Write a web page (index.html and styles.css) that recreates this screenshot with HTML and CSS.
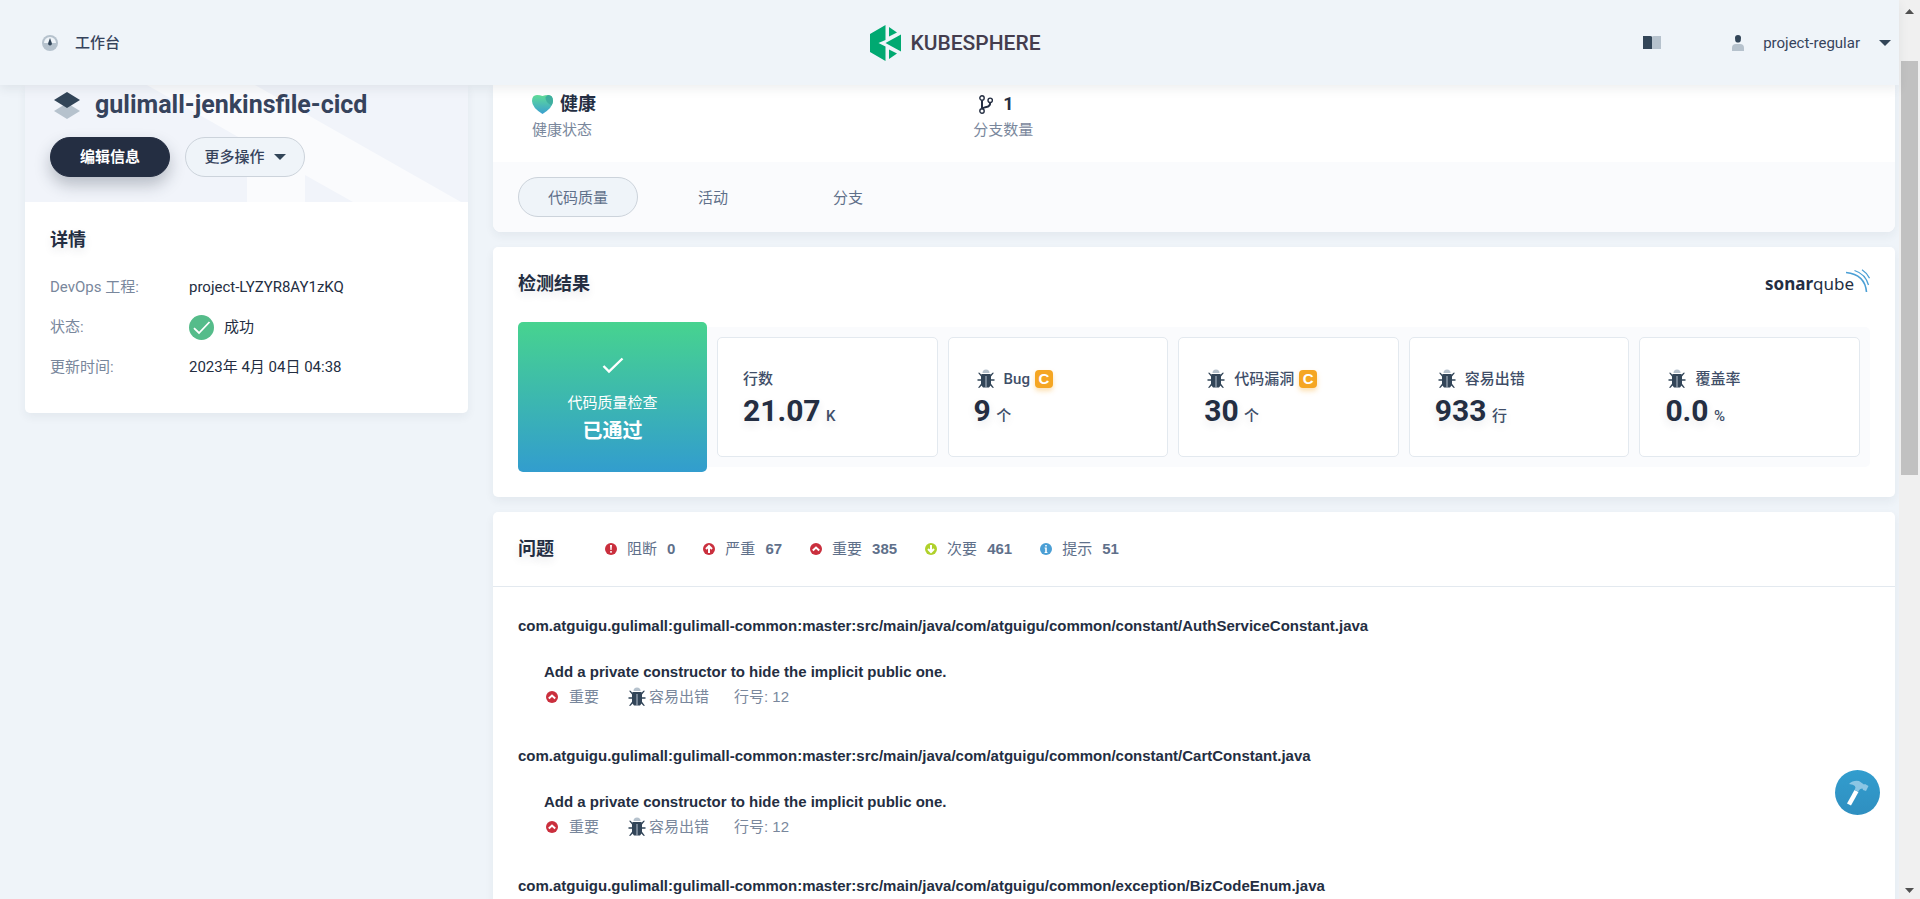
FILE: index.html
```html
<!DOCTYPE html>
<html lang="zh-CN">
<head>
<meta charset="utf-8">
<title>gulimall-jenkinsfile-cicd - KubeSphere</title>
<link rel="stylesheet" href="styles.css">
</head>
<body>
<svg class="sprite" aria-hidden="true">
  <symbol id="i-bug" viewBox="0 0 20 20">
    <path class="c-light" d="M6.500 4a3.500 3.500 0 0 1 7 0z"/>
    <path class="c-dark" d="M5.500 5h9l.5 2v9l-2 2.500H7L5 16V7z"/>
    <path class="c-light" d="M9.500 7h1v11.500h-1z"/>
    <path class="c-dark" d="M2 3.800h1.600l2.400 2.600-1 1.200zM18 3.800h-1.600L14 6.400l1 1.200zM1.500 10.200h4v1.600h-4zM14.500 10.200h4v1.600h-4zM2 18.700h1.600l2.600-3-1-1.200zM18 18.700h-1.600l-2.600-3 1-1.200z"/>
  </symbol>
  <symbol id="i-major" viewBox="0 0 12 12">
    <circle class="c-red" cx="6" cy="6" r="6"/>
    <path class="ln" d="M2.800 7.500L6 4.500l3.200 3"/>
  </symbol>
  <symbol id="i-caret" viewBox="0 0 12 6"><path class="c-dark" d="M0 0h12L6 6z"/></symbol>
</svg>
<div class="window">
  <div class="page">
    <header class="topbar">
      <nav class="topbar-side">
        <a class="nav-link" href="#">
          <svg class="ico16" viewBox="0 0 16 16"><circle class="c-light" cx="8" cy="8" r="8"/><path fill="#eff4f9" d="M2 8a6 6 0 0 1 12 0z"/><path class="c-dark" d="M8 3l1.800 5a1.900 1.900 0 1 1-3.600 0z"/></svg>
          <span>工作台</span>
        </a>
      </nav>
      <a class="brand" href="#">
        <svg class="brand-mark" viewBox="0 0 31 36"><path fill="#00a971" d="M0 9L15.500 0v15L8.500 18l7 3.500V36L0 27zM19 2l8 5.500-8 4zM31 9.500v17L15.500 18zM19 24.500l8 4-8 5.500z"/></svg>
        <span>KUBESPHERE</span>
      </a>
      <div class="topbar-side topbar-right">
        <button class="plain" aria-label="文档">
          <svg class="book" viewBox="0 0 18 13"><path class="c-dark" d="M0 0h7q2 0 2 1v12H0z"/><path class="c-light" d="M18 0h-7Q9 0 9 1v12h9z"/></svg>
        </button>
        <button class="plain user">
          <svg class="person" viewBox="0 0 12 16"><path class="c-dark" d="M6 0q3 0 3 3t-1 4q-2 1-4 0-1-1-1-4t3-3z"/><path class="c-light" d="M0 16v-3q0-4 4-4h4q4 0 4 4v3z"/></svg>
          <span>project-regular</span>
          <svg class="caret"><use href="#i-caret"/></svg>
        </button>
      </div>
    </header>

    <main class="content">
      <aside class="card side">
        <div class="banner">
          <svg class="banner-art" viewBox="0 0 443 117" preserveAspectRatio="xMinYMin slice" aria-hidden="true"><path fill="#fafbfd" d="M122 0h108l206 117H328L280 90v27h-58V57z"/></svg>
          <div class="title-row">
            <svg class="layers" viewBox="0 0 26 27"><path class="c-light" d="M0 19l13-8 13 8-13 8z"/><path class="c-dark" d="M0 8l13-8 13 8-13 8z"/></svg>
            <h1>gulimall-jenkinsfile-cicd</h1>
          </div>
          <div class="actions">
            <button class="pill pill-dark">编辑信息</button>
            <button class="pill">更多操作 <svg class="caret"><use href="#i-caret"/></svg></button>
          </div>
        </div>
        <section class="details">
          <h2>详情</h2>
          <dl>
            <dt>DevOps 工程:</dt><dd>project-LYZYR8AY1zKQ</dd>
            <dt>状态:</dt><dd><svg class="ok" viewBox="0 0 25 25"><circle fill="#55bc8a" cx="12.500" cy="12.500" r="12.500"/><path fill="none" stroke="#fff" stroke-width="1.800" d="M5 13.200l5 4.800L20.500 7"/></svg>成功</dd>
            <dt>更新时间:</dt><dd>2023年 4月 04日 04:38</dd>
          </dl>
        </section>
      </aside>

      <div class="main-col">
        <section class="card overview">
          <div class="stats">
            <div class="stat">
              <div class="stat-value">
                <svg class="heart" viewBox="0 0 21 19"><defs><linearGradient id="hg" x1="0" y1="0" x2="0" y2="1"><stop offset="0" stop-color="#5fdc98"/><stop offset="1" stop-color="#3a9fd0"/></linearGradient></defs><path fill="url(#hg)" d="M10.500 19Q0 12.500 0 6 0 0 5 0q3 0 5.500 1Q13 0 16 0q5 0 5 6 0 6.500-10.500 13z"/><path fill="#3fae9f" d="M16 0q5 0 5 6 0 2-1.500 4.500Q13 7 13.500 2z"/></svg>
                健康
              </div>
              <div class="stat-label">健康状态</div>
            </div>
            <div class="stat">
              <div class="stat-value branch-value">
                <svg class="branch" viewBox="0 0 14 19"><g fill="none" stroke="#242e42"><path stroke-width="2" d="M3 5.500v8M11.200 7.500q0 4-4 4.500-3 .5-4 2"/><circle stroke-width="1.400" cx="3" cy="3" r="2.200"/><circle stroke-width="1.400" cx="3" cy="16" r="2.200"/><circle stroke-width="1.400" cx="11.200" cy="5.300" r="2.200"/></g></svg>
                1
              </div>
              <div class="stat-label">分支数量</div>
            </div>
          </div>
          <nav class="tabs">
            <a class="tab active" href="#">代码质量</a>
            <a class="tab" href="#">活动</a>
            <a class="tab" href="#">分支</a>
          </nav>
        </section>

        <section class="card result">
          <div class="result-head">
            <h2>检测结果</h2>
            <div class="sonar"><b>sonar</b><span>qube</span><svg viewBox="0 0 24 24"><g fill="none" stroke="#4b9fd5"><path stroke-width="1.600" d="M0 3.500q19 2 20.500 19.500"/><path stroke-width="1.300" d="M8.500 1.500Q19.500 5 22.500 16"/><path stroke-width="1.200" d="M16 .7q5 3.200 7.500 8.500"/></g></svg></div>
          </div>
          <div class="metrics-row">
            <div class="gate">
              <svg viewBox="0 0 22 17"><path fill="none" stroke="#fff" stroke-width="2.400" d="M1.500 9l5.500 5.500L20.500 1.500"/></svg>
              <span>代码质量检查</span>
              <strong>已通过</strong>
            </div>
            <div class="metrics">
              <div class="metric"><div class="m-label">行数</div><div class="m-value">21.07 <small>K</small></div></div>
              <div class="metric"><div class="m-label"><svg class="bug"><use href="#i-bug"/></svg><span>Bug</span><b class="grade">C</b></div><div class="m-value">9 <small>个</small></div></div>
              <div class="metric"><div class="m-label"><svg class="bug"><use href="#i-bug"/></svg><span>代码漏洞</span><b class="grade">C</b></div><div class="m-value">30 <small>个</small></div></div>
              <div class="metric"><div class="m-label"><svg class="bug"><use href="#i-bug"/></svg><span>容易出错</span></div><div class="m-value">933 <small>行</small></div></div>
              <div class="metric"><div class="m-label"><svg class="bug"><use href="#i-bug"/></svg><span>覆盖率</span></div><div class="m-value">0.0 <small>%</small></div></div>
            </div>
          </div>
        </section>

        <section class="card issues">
          <div class="issues-head">
            <h2>问题</h2>
            <ul class="levels">
              <li><svg class="lv" viewBox="0 0 12 12"><circle class="c-red" cx="6" cy="6" r="6"/><path fill="#fff" d="M5 2h2l-.4 5H5.400zM5.200 8h1.600v1.700H5.200z"/></svg><span>阻断</span><b>0</b></li>
              <li><svg class="lv" viewBox="0 0 12 12"><circle class="c-red" cx="6" cy="6" r="6"/><path class="ln" d="M6 10V3.500M3 6l3-3 3 3"/></svg><span>严重</span><b>67</b></li>
              <li><svg class="lv"><use href="#i-major"/></svg><span>重要</span><b>385</b></li>
              <li><svg class="lv" viewBox="0 0 12 12"><circle fill="#b0d12b" cx="6" cy="6" r="6"/><path class="ln" d="M6 2v6.500M3 6l3 3 3-3"/></svg><span>次要</span><b>461</b></li>
              <li><svg class="lv" viewBox="0 0 12 12"><circle fill="#4b9fd5" cx="6" cy="6" r="6"/><path fill="#fff" d="M5.200 2h1.600v1.500H5.200zM4.600 4.500h2.200V9h.6v1H4.600V9h.6V5.500h-.6z"/></svg><span>提示</span><b>51</b></li>
            </ul>
          </div>
          <div class="issue-list">
            <article class="file">
              <h3>com.atguigu.gulimall:gulimall-common:master:src/main/java/com/atguigu/common/constant/AuthServiceConstant.java</h3>
              <div class="issue">
                <p class="message">Add a private constructor to hide the implicit public one.</p>
                <div class="meta"><span class="sev"><svg class="lv"><use href="#i-major"/></svg>重要</span><span class="type"><svg class="bug"><use href="#i-bug"/></svg>容易出错</span><span>行号: 12</span></div>
              </div>
            </article>
            <article class="file">
              <h3>com.atguigu.gulimall:gulimall-common:master:src/main/java/com/atguigu/common/constant/CartConstant.java</h3>
              <div class="issue">
                <p class="message">Add a private constructor to hide the implicit public one.</p>
                <div class="meta"><span class="sev"><svg class="lv"><use href="#i-major"/></svg>重要</span><span class="type"><svg class="bug"><use href="#i-bug"/></svg>容易出错</span><span>行号: 12</span></div>
              </div>
            </article>
            <article class="file">
              <h3>com.atguigu.gulimall:gulimall-common:master:src/main/java/com/atguigu/common/exception/BizCodeEnum.java</h3>
            </article>
          </div>
        </section>
      </div>
    </main>
  </div>

  <div class="scrollbar" aria-hidden="true">
    <svg class="sb-arrow" viewBox="0 0 9 5"><path fill="#505050" d="M4.500 0L9 5H0z"/></svg>
    <div class="sb-track"><div class="sb-thumb"></div></div>
    <svg class="sb-arrow" viewBox="0 0 9 5"><path fill="#505050" d="M0 0h9L4.500 5z"/></svg>
  </div>
</div>
<button class="fab" aria-label="工具箱">
  <svg viewBox="0 0 24 26"><path fill="#fff" d="M8.500 10l4 2L5 25.500 1 23.500z"/><path fill="#8cc6e4" d="M3 4Q7 0 13 1l5 3.500 1-.5 3.500 2L20 11l-3-1-.5-1.500q-3 0-4 3L8.500 10Q12 5 3 4z"/></svg>
</button>
</body>
</html>
```
FILE: styles.css
```css
* { box-sizing: border-box; }
body {
  margin: 0;
  height: 100vh;
  overflow: hidden;
  background: #eff4f9;
  color: #242e42;
  font: 400 15px/20px Roboto, "Noto Sans CJK SC", sans-serif;
}
h1, h2, h3, p, ul, dl, dd { margin: 0; padding: 0; }
a { color: inherit; text-decoration: none; }
button { font: inherit; color: inherit; cursor: pointer; }
svg { display: block; flex: none; }
.sprite { position: absolute; width: 0; height: 0; }
.c-dark { fill: #324558; }
.c-light { fill: #b6c2cd; }
.c-red { fill: #ca2f3d; }
.ln { fill: none; stroke: #fff; stroke-width: 2; }

.window { display: flex; height: 100vh; }
.page { flex: 1; min-width: 0; display: flex; flex-direction: column; }

.topbar {
  position: relative;
  z-index: 2;
  display: flex;
  align-items: center;
  flex: none;
  height: 85px;
  padding: 0 8px 0 20px;
  background: #eff4f9;
  box-shadow: 0 4px 10px rgba(36, 46, 66, 0.08);
  color: #36435c;
}
.topbar-side { flex: 1 1 0; display: flex; align-items: center; }
.topbar-right { justify-content: flex-end; gap: 71px; }
.nav-link { display: flex; align-items: center; gap: 17px; padding-left: 22px; font-weight: 500; }
.ico16 { width: 16px; height: 16px; }
.brand {
  display: flex;
  align-items: center;
  gap: 9px;
  color: #443d4e;
  font-size: 21px;
  line-height: 36px;
  font-weight: 500;
}
.brand-mark { width: 31px; height: 36px; }
.plain { display: flex; align-items: center; padding: 0; border: 0; background: none; }
.user { gap: 19px; }
.book { width: 18px; height: 13px; }
.person { width: 12px; height: 16px; }
.caret { width: 12px; height: 6px; }

.content {
  flex: 1;
  min-height: 0;
  display: grid;
  grid-template-columns: 443px minmax(0, 1fr);
  align-items: start;
  gap: 25px;
  padding: 0 4px 0 25px;
  overflow: hidden;
}
.card {
  background: #fff;
  border-radius: 5px;
  box-shadow: 0 4px 10px rgba(36, 46, 66, 0.06);
}
h2 { font-size: 18px; line-height: 24px; font-weight: 700; text-shadow: 0 4px 8px rgba(36, 46, 66, 0.1); }

.side { border-radius: 0 0 5px 5px; }
.banner { position: relative; padding: 4px 25px 25px; background: #f1f4fa; }
.banner-art { position: absolute; inset: 0; width: 100%; height: 100%; }
.title-row { position: relative; display: flex; align-items: center; gap: 15px; height: 32px; padding-left: 4px; }
.layers { width: 26px; height: 27px; }
h1 { font-size: 25px; line-height: 32px; font-weight: 700; color: #36435c; }
.actions { position: relative; display: flex; gap: 15px; margin-top: 16px; }
.pill {
  display: flex;
  align-items: center;
  justify-content: center;
  gap: 9px;
  width: 120px;
  height: 40px;
  padding: 0;
  border: 1px solid #ccd3db;
  border-radius: 20px;
  background: #eff4f9;
  color: #36435c;
  font-weight: 500;
}
.pill-dark {
  border-color: #242e42;
  background: #242e42;
  color: #fff;
  font-weight: 700;
  box-shadow: 0 8px 16px rgba(36, 46, 66, 0.28);
}
.details { padding: 26px 25px 31px; }
.details dl {
  display: grid;
  grid-template-columns: 114px 1fr;
  column-gap: 25px;
  row-gap: 10px;
  margin-top: 20px;
}
.details dt, .details dd { display: flex; align-items: center; min-height: 30px; }
.details dt { color: #79879c; }
.ok { width: 25px; height: 25px; margin-right: 10px; }

.main-col { display: flex; flex-direction: column; gap: 15px; }
.overview { border-radius: 0 0 8px 8px; }
.stats { display: grid; grid-template-columns: repeat(3, 1fr); padding: 7px 39px 21px; }
.stat-value { display: flex; align-items: center; gap: 7px; height: 24px; font-size: 18px; font-weight: 700; }
.stat-label { margin-top: 3px; line-height: 22px; color: #79879c; }
.heart { width: 21px; height: 19px; }
.branch { width: 14px; height: 19px; }
.branch-value { gap: 10px; padding-left: 6px; }
.tabs { display: flex; gap: 15px; padding: 15px 25px; background: #fafbfd; border-radius: 0 0 8px 8px; }
.tab {
  width: 120px;
  height: 40px;
  border: 1px solid transparent;
  border-radius: 20px;
  line-height: 40px;
  text-align: center;
  color: #5f708a;
}
.tab.active { border-color: #ccd3db; background: #eff4f9; }

.result { padding: 20px 25px 25px; }
.result-head { display: flex; align-items: flex-start; justify-content: space-between; height: 55px; padding-top: 5px; }
.sonar { display: flex; align-items: center; font: 400 17px/24px "Noto Sans", sans-serif; color: #242e42; }
.sonar svg { width: 24px; height: 24px; margin: -6px 0 0 -8px; }
.metrics-row { display: flex; align-items: center; }
.gate {
  width: 189px;
  height: 150px;
  display: flex;
  flex-direction: column;
  align-items: center;
  padding-top: 35px;
  border-radius: 5px;
  background: linear-gradient(180deg, #47d38f, #329dce);
  color: #fff;
}
.gate svg { width: 22px; height: 17px; }
.gate span { margin-top: 19px; }
.gate strong { margin-top: 4px; font-size: 20px; line-height: 28px; }
.metrics { flex: 1; display: flex; gap: 10px; padding: 10px; background: #fafbfd; border-radius: 0 5px 5px 0; }
.metric { flex: 1; height: 120px; padding: 31px 25px 0; border: 1px solid #e3e9ef; border-radius: 5px; background: #fff; }
.m-label { display: flex; align-items: center; height: 20px; font-weight: 500; color: #404e68; }
.m-label .bug { margin: 0 8px 0 2px; }
.bug { width: 20px; height: 20px; }
.grade {
  width: 18px;
  margin-left: 5px;
  border-radius: 4px;
  background: #f5a623;
  color: #fff;
  line-height: 18px;
  text-align: center;
  font-family: "Liberation Sans", sans-serif;
  box-shadow: 0 3px 5px rgba(245, 166, 35, 0.35);
}
.m-value { font-size: 30px; line-height: 44px; font-weight: 700; text-shadow: 0 4px 8px rgba(36, 46, 66, 0.1); }
.m-value small { font-size: 15px; font-weight: 500; color: #404e68; margin-left: -2px; }

.issues-head { display: flex; align-items: center; gap: 51px; height: 75px; padding: 0 25px; border-bottom: 1px solid #e3e9ef; }
.levels { display: flex; gap: 28px; list-style: none; color: #5f708a; font-family: "Liberation Sans", "Noto Sans CJK SC", sans-serif; }
.levels li { display: flex; align-items: center; gap: 10px; }
.lv { width: 12px; height: 12px; }
.issue-list { padding: 29px 25px 0; font-family: "Liberation Sans", "Noto Sans CJK SC", sans-serif; }
.file { height: 130px; }
.file h3, .message { font-size: 15px; line-height: 20px; font-weight: 700; }
.issue { margin-top: 26px; padding-left: 26px; }
.meta { display: flex; align-items: center; gap: 25px; margin-top: 4px; line-height: 22px; color: #79879c; }
.sev { display: flex; align-items: center; gap: 11px; padding-left: 2px; }
.type { display: flex; align-items: center; gap: 2px; padding-left: 3px; }

.scrollbar { flex: none; width: 21px; display: flex; flex-direction: column; align-items: center; padding: 9px 0 6px; background: #f0f0f0; }
.sb-arrow { width: 9px; height: 5px; }
.sb-track { flex: 1; width: 17px; padding: 47px 0 0; }
.sb-thumb { height: 50%; background: #c1c1c1; }

.fab {
  position: fixed;
  right: 40px;
  bottom: 84px;
  z-index: 3;
  display: grid;
  place-items: center;
  width: 45px;
  height: 45px;
  padding: 0;
  border: 0;
  border-radius: 50%;
  background: linear-gradient(180deg, #329dce, #2f8fc0);
}
.fab svg { width: 24px; height: 26px; }
```
